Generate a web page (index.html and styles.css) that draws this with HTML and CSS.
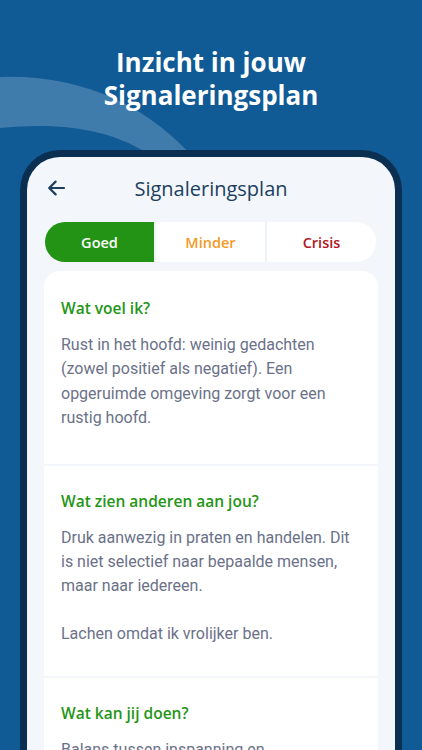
FILE: index.html
```html
<!DOCTYPE html>
<html lang="nl">
<head>
<meta charset="utf-8">
<title>Signaleringsplan</title>
<link rel="stylesheet" href="styles.css">
</head>
<body>
<div class="page">
  <svg class="arc" width="422" height="200" viewBox="0 0 422 200" aria-hidden="true">
    <path d="M0 77 C 80 74 150 105 200 165 L 163 165 C 120 128 60 122 0 128 Z" fill="#ffffff" fill-opacity="0.2"/>
  </svg>
  <h1 class="hero">Inzicht in jouw<br>Signaleringsplan</h1>
  <div class="phone">
    <div class="screen">
      <header class="topbar">
        <svg class="back" width="18" height="16" viewBox="0 0 18 16" aria-hidden="true">
          <path d="M17 8H2.2M8.6 1.6L2.2 8l6.4 6.4" fill="none" stroke="currentColor" stroke-width="2.2" stroke-linecap="round" stroke-linejoin="round"/>
        </svg>
        <span class="title">Signaleringsplan</span>
      </header>
      <div class="tabs">
        <div class="tab tab-goed">Goed</div>
        <div class="tab tab-minder">Minder</div>
        <div class="tab tab-crisis">Crisis</div>
      </div>
      <div class="card">
        <section class="block first">
          <h2>Wat voel ik?</h2>
          <p>Rust in het hoofd: weinig gedachten (zowel positief als negatief). Een opgeruimde omgeving zorgt voor een rustig hoofd.</p>
        </section>
        <section class="block second">
          <h2>Wat zien anderen aan jou?</h2>
          <p>Druk aanwezig in praten en handelen. Dit is niet selectief naar bepaalde mensen, maar naar iedereen.</p>
          <p class="spaced">Lachen omdat ik vrolijker ben.</p>
        </section>
        <section class="block">
          <h2>Wat kan jij doen?</h2>
          <p>Balans tussen inspanning en ontspanningsmomenten bewaken.</p>
        </section>
      </div>
    </div>
  </div>
</div>
</body>
</html>
```

FILE: styles.css
```css
html, body {
  margin: 0;
  padding: 0;
}
body {
  background: #105a96;
  width: 422px;
  height: 750px;
  overflow: hidden;
}
.page {
  position: relative;
  width: 422px;
  height: 750px;
  overflow: hidden;
}
.arc {
  position: absolute;
  left: 0;
  top: 0;
}
.hero {
  position: relative;
  margin: 0;
  padding-top: 46px;
  text-align: center;
  color: #ffffff;
  font-family: "Open Sans", "Noto Sans", sans-serif;
  font-weight: 700;
  font-size: 26px;
  line-height: 33px;
  letter-spacing: 0;
}
.phone {
  position: relative;
  margin: 38px 20px 0;
  border: 7px solid #0b2f51;
  border-bottom: none;
  border-radius: 40px 40px 0 0;
  background: #f3f7fc;
  height: 620px;
}
.screen {
  display: flex;
  flex-direction: column;
}
.topbar {
  position: relative;
  height: 44px;
  margin-top: 9px;
  display: flex;
  align-items: center;
  justify-content: center;
  color: #1d3f5f;
}
.back {
  position: absolute;
  left: 20px;
  top: 14px;
  color: #1d3f5f;
}
.title {
  font-family: "Open Sans", "Noto Sans", sans-serif;
  font-size: 20px;
  font-weight: 400;
  color: #1d3f5f;
}
.tabs {
  margin: 12px 19px 0 18px;
  height: 40px;
  display: grid;
  grid-template-columns: 1fr 1fr 1fr;
  gap: 2px;
  background: #eef3f8;
  border-radius: 20px;
  overflow: hidden;
}
.tab {
  background: #ffffff;
  display: flex;
  align-items: center;
  justify-content: center;
  font-family: "Open Sans", "Noto Sans", sans-serif;
  font-size: 14.5px;
  font-weight: 600;
}
.tab-goed {
  background: #229314;
  color: #ffffff;
}
.tab-minder {
  color: #f39a27;
}
.tab-crisis {
  color: #b2161f;
}
.card {
  margin: 9px 17px 0;
  display: flex;
  flex-direction: column;
  gap: 2px;
  border-radius: 16px 16px 0 0;
  overflow: hidden;
}
.block {
  background: #ffffff;
  padding: 25px 17px 32px;
}
.block.first {
  padding-top: 27px;
  padding-bottom: 33px;
}
.block.second {
  padding-bottom: 30px;
}
.block h2 {
  margin: 0 0 15px;
  font-family: "Open Sans", "Noto Sans", sans-serif;
  font-size: 15.5px;
  line-height: 20px;
  font-weight: 600;
  color: #249516;
}
.block p {
  margin: 0;
  font-family: Roboto, "Liberation Sans", sans-serif;
  font-size: 16px;
  line-height: 24.4px;
  color: #6b7189;
}
.block p.spaced {
  margin-top: 22.8px;
}
```
